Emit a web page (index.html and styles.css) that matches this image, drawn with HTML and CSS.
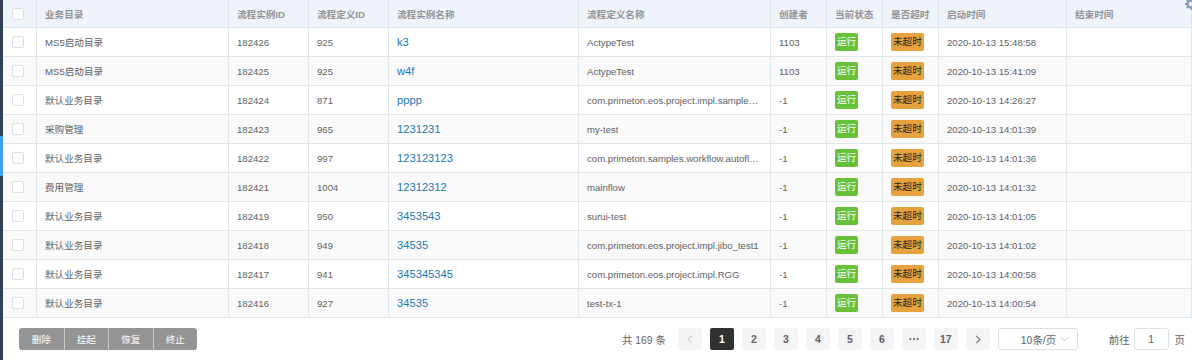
FILE: index.html
```html
<!DOCTYPE html>
<html lang="zh-CN">
<head>
    <meta charset="UTF-8">
    <title>流程实例</title>
    <link rel="stylesheet" href="styles.css">
</head>
<body>
    <div class="layout">
        <div class="sidebar">
            <div class="sidebar-active"></div>
        </div>

        <div class="main">
            <div class="table-wrap">
                <svg class="gear" viewBox="0 0 16 16" width="12" height="12">
                    <path d="M6.8 0h2.4l.4 2.1 1.3.6 1.8-1.2 1.7 1.7-1.2 1.8.6 1.3 2.1.4v2.4l-2.1.4-.6 1.3 1.2 1.8-1.7 1.7-1.8-1.2-1.3.6-.4 2.1H6.8l-.4-2.1-1.3-.6-1.8 1.2-1.7-1.7 1.2-1.8-.6-1.3L0 9.2V6.8l2.1-.4.6-1.3-1.2-1.8 1.7-1.7 1.8 1.2 1.3-.6z M8 5a3 3 0 1 0 0 6 3 3 0 1 0 0-6z" fill="#8a9bb3" fill-rule="evenodd"/>
                </svg>
                <table class="grid">
                    <colgroup>
                        <col style="width:34px">
                        <col style="width:192px">
                        <col style="width:80px">
                        <col style="width:80px">
                        <col style="width:190px">
                        <col style="width:192px">
                        <col style="width:56px">
                        <col style="width:56px">
                        <col style="width:56px">
                        <col style="width:128px">
                        <col style="width:125px">
                    </colgroup>
                    <thead>
                        <tr>
                            <th><div class="cell check-cell"><span class="checkbox"></span></div></th>
                            <th><div class="cell">业务目录</div></th>
                            <th><div class="cell">流程实例ID</div></th>
                            <th><div class="cell">流程定义ID</div></th>
                            <th><div class="cell">流程实例名称</div></th>
                            <th><div class="cell">流程定义名称</div></th>
                            <th><div class="cell">创建者</div></th>
                            <th><div class="cell">当前状态</div></th>
                            <th><div class="cell">是否超时</div></th>
                            <th><div class="cell">启动时间</div></th>
                            <th><div class="cell">结束时间</div></th>
                        </tr>
                    </thead>
                    <tbody id="rows"></tbody>
                </table>
            </div>

            <div class="footer">
                <div class="btn-group">
                    <button class="btn">删除</button>
                    <button class="btn">挂起</button>
                    <button class="btn">恢复</button>
                    <button class="btn">终止</button>
                </div>

                <div class="pagination">
                    <span class="total">共 169 条</span>
                    <button class="page-btn arrow disabled">
                        <svg viewBox="0 0 8 12" width="6" height="9"><path d="M6.5 1L1.5 6l5 5" fill="none" stroke="currentColor" stroke-width="1.4"/></svg>
                    </button>
                    <button class="page-btn active">1</button>
                    <button class="page-btn">2</button>
                    <button class="page-btn">3</button>
                    <button class="page-btn">4</button>
                    <button class="page-btn">5</button>
                    <button class="page-btn">6</button>
                    <button class="page-btn">
                        <svg viewBox="0 0 12 4" width="10" height="4"><circle cx="1.6" cy="2" r="1.3" fill="#606266"/><circle cx="6" cy="2" r="1.3" fill="#606266"/><circle cx="10.4" cy="2" r="1.3" fill="#606266"/></svg>
                    </button>
                    <button class="page-btn">17</button>
                    <button class="page-btn arrow">
                        <svg viewBox="0 0 8 12" width="6" height="9"><path d="M1.5 1l5 5-5 5" fill="none" stroke="currentColor" stroke-width="1.4"/></svg>
                    </button>
                    <div class="page-size">
                        <span>10条/页</span>
                        <svg viewBox="0 0 12 8" width="9" height="6"><path d="M1 1.5l5 5 5-5" fill="none" stroke="#c0c4cc" stroke-width="1.2"/></svg>
                    </div>
                    <span class="jump">前往</span>
                    <span class="jump-input">1</span>
                    <span class="jump">页</span>
                </div>
            </div>
        </div>
    </div>

    <script>
        const data = [
            ['MS5启动目录', '182426', '925', 'k3', 'ActypeTest', '1103', '2020-10-13 15:48:58'],
            ['MS5启动目录', '182425', '925', 'w4f', 'ActypeTest', '1103', '2020-10-13 15:41:09'],
            ['默认业务目录', '182424', '871', 'pppp', 'com.primeton.eos.project.impl.samples.workflow', '-1', '2020-10-13 14:26:27'],
            ['采购管理', '182423', '965', '1231231', 'my-test', '-1', '2020-10-13 14:01:39'],
            ['默认业务目录', '182422', '997', '123123123', 'com.primeton.samples.workflow.autoflowtest', '-1', '2020-10-13 14:01:36'],
            ['费用管理', '182421', '1004', '12312312', 'mainflow', '-1', '2020-10-13 14:01:32'],
            ['默认业务目录', '182419', '950', '3453543', 'surui-test', '-1', '2020-10-13 14:01:05'],
            ['默认业务目录', '182418', '949', '34535', 'com.primeton.eos.project.impl.jibo_test1', '-1', '2020-10-13 14:01:02'],
            ['默认业务目录', '182417', '941', '345345345', 'com.primeton.eos.project.impl.RGG', '-1', '2020-10-13 14:00:58'],
            ['默认业务目录', '182416', '927', '34535', 'test-tx-1', '-1', '2020-10-13 14:00:54']
        ];

        const tbody = document.getElementById('rows');
        data.forEach(function(r, i) {
            const tr = document.createElement('tr');
            if (i % 2 === 1) tr.className = 'striped';
            tr.innerHTML =
                '<td><div class="cell check-cell"><span class="checkbox"></span></div></td>' +
                '<td><div class="cell">' + r[0] + '</div></td>' +
                '<td><div class="cell">' + r[1] + '</div></td>' +
                '<td><div class="cell">' + r[2] + '</div></td>' +
                '<td><div class="cell"><span class="link">' + r[3] + '</span></div></td>' +
                '<td><div class="cell"><span class="ellipsis">' + r[4] + '</span></div></td>' +
                '<td><div class="cell">' + r[5] + '</div></td>' +
                '<td><div class="cell"><span class="tag tag-success">运行</span></div></td>' +
                '<td><div class="cell"><span class="tag tag-warning">未超时</span></div></td>' +
                '<td><div class="cell">' + r[6] + '</div></td>' +
                '<td><div class="cell"></div></td>';
            tbody.appendChild(tr);
        });
    </script>
</body>
</html>
```

FILE: styles.css
```css
* {
    box-sizing: border-box;
    margin: 0;
    padding: 0;
}

body {
    font-family: 'Liberation Sans', 'Noto Sans CJK SC', sans-serif;
    font-size: 9.6px;
    color: #606266;
    background: #fff;
    width: 1192px;
    height: 360px;
    overflow: hidden;
}

.layout {
    display: flex;
    height: 360px;
}

.sidebar {
    width: 3px;
    flex-shrink: 0;
    background: #304156;
}

.sidebar-active {
    height: 40px;
    margin-top: 136px;
    background: #409eff;
}

.main {
    flex: 1;
    display: flex;
    flex-direction: column;
}

.table-wrap {
    position: relative;
}

.gear {
    position: absolute;
    top: -2px;
    right: -5px;
}

.grid {
    width: 1189px;
    table-layout: fixed;
    border-collapse: separate;
    border-spacing: 0;
}

.grid th,
.grid td {
    padding: 0;
    border-right: 1px solid #dfe6ec;
    border-bottom: 1px solid #dfe6ec;
    text-align: left;
}

.grid th {
    background: #eff3fa;
    color: #909399;
    font-weight: 700;
}

.grid th .cell {
    height: 27px;
}

.cell {
    height: 28px;
    padding: 0 8px;
    display: flex;
    align-items: center;
    white-space: nowrap;
    overflow: hidden;
}

.check-cell {
    padding-left: 9px;
}

.checkbox {
    display: block;
    width: 12px;
    height: 12px;
    border: 1px solid #dcdfe6;
    border-radius: 2px;
    background: #fff;
}

.striped td {
    background: #fafafa;
}

.link {
    color: #1a7ab8;
    font-size: 11.2px;
}

.ellipsis {
    display: block;
    overflow: hidden;
    text-overflow: ellipsis;
    white-space: nowrap;
}

.tag {
    display: inline-block;
    height: 18px;
    line-height: 18px;
    padding: 0 2px;
    border-radius: 2px;
    font-size: 9.6px;
}

.tag-success {
    background: #67c23a;
    color: #fff;
}

.tag-warning {
    background: #e6a23c;
    color: #222;
}

/* 底部 */
.footer {
    flex: 1;
    display: flex;
    align-items: center;
    padding: 0 7px 0 16px;
}

.btn-group {
    display: flex;
}

.btn {
    width: 44.5px;
    height: 22px;
    border: none;
    border-left: 1px solid rgba(255, 255, 255, 0.5);
    background: #949494;
    color: #fff;
    font-family: inherit;
    font-size: 9.6px;
}

.btn:first-child {
    border-left: none;
    border-radius: 3px 0 0 3px;
}

.btn:last-child {
    border-radius: 0 3px 3px 0;
}

.pagination {
    margin-left: auto;
    display: flex;
    align-items: center;
    font-size: 10.4px;
}

.total {
    margin-right: 8px;
}

.page-btn {
    width: 24px;
    height: 22px;
    margin: 0 4px;
    border: none;
    border-radius: 2px;
    background: #f4f4f5;
    color: #606266;
    font-family: inherit;
    font-size: 10.4px;
    font-weight: 700;
    display: flex;
    align-items: center;
    justify-content: center;
}

.page-btn.active {
    background: #303133;
    color: #fff;
}

.page-btn.arrow {
    color: #606266;
}

.page-btn.disabled {
    color: #c0c4cc;
}

.page-size {
    width: 80px;
    height: 22px;
    margin-left: 4px;
    border: 1px solid #dcdfe6;
    border-radius: 3px;
    display: flex;
    align-items: center;
    justify-content: space-between;
    padding: 0 8px 0 22px;
    color: #606266;
}

.jump {
    color: #606266;
}

.page-size + .jump {
    margin-left: 31px;
}

.jump-input {
    width: 35px;
    height: 22px;
    margin: 0 6px 0 4px;
    border: 1px solid #dcdfe6;
    border-radius: 3px;
    display: flex;
    align-items: center;
    justify-content: center;
}
```
